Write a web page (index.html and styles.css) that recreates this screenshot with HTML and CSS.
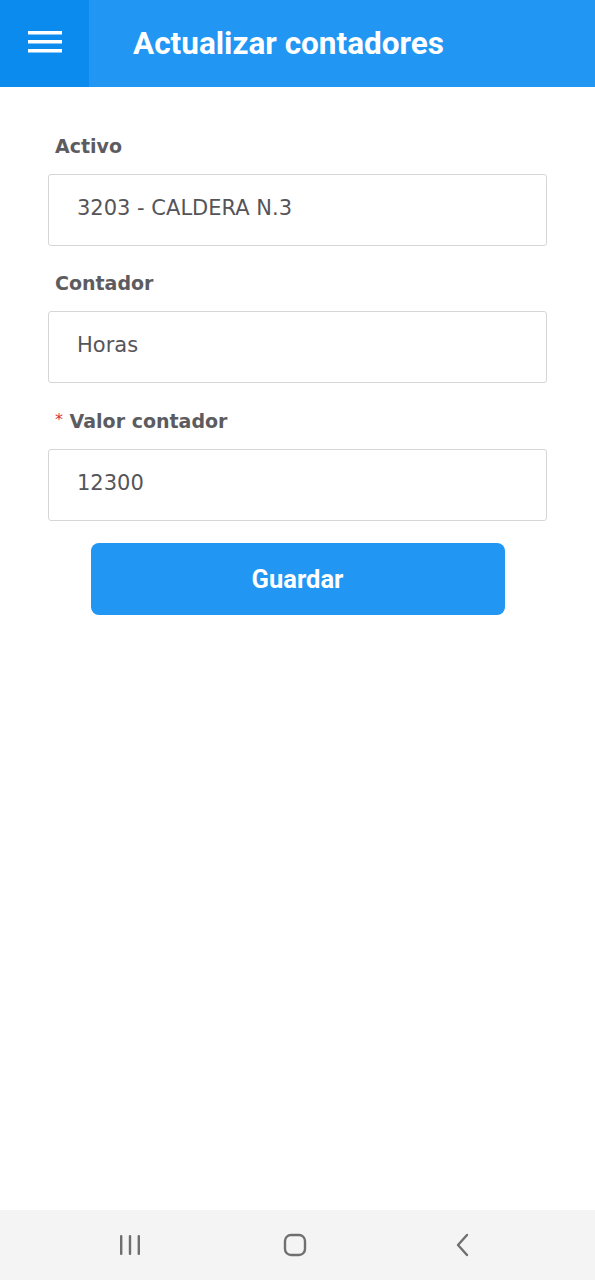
FILE: index.html
```
<!DOCTYPE html>
<html lang="es">
<head>
<meta charset="utf-8">
<link rel="stylesheet" href="styles.css">
</head>
<body>
<div class="screen">
  <header class="appbar">
    <div class="menu-btn">
      <svg width="34" height="22" viewBox="0 0 34 22"><rect x="0" y="0" width="34" height="3.5" fill="#fff"/><rect x="0" y="9" width="34" height="3.5" fill="#fff"/><rect x="0" y="18" width="34" height="3.5" fill="#fff"/></svg>
    </div>
    <h1 class="title">Actualizar contadores</h1>
  </header>
  <main class="form">
    <div class="field">
      <label class="label">Activo</label>
      <div class="input">3203 - CALDERA N.3</div>
    </div>
    <div class="field">
      <label class="label">Contador</label>
      <div class="input">Horas</div>
    </div>
    <div class="field">
      <label class="label"><span class="req">*</span> Valor contador</label>
      <div class="input">12300</div>
    </div>
    <div class="actions">
      <button class="btn">Guardar</button>
    </div>
  </main>
  <nav class="navbar">
    <svg width="24" height="22" viewBox="0 0 24 22"><rect x="2" y="1" width="2.4" height="20" rx="1" fill="#6f6f6f"/><rect x="10.8" y="1" width="2.4" height="20" rx="1" fill="#6f6f6f"/><rect x="19.6" y="1" width="2.4" height="20" rx="1" fill="#6f6f6f"/></svg>
    <svg width="24" height="24" viewBox="0 0 24 24"><rect x="2" y="2" width="20" height="20" rx="6" fill="none" stroke="#6f6f6f" stroke-width="2.4"/></svg>
    <svg width="24" height="24" viewBox="0 0 24 24"><path d="M19 2 L10 12 L19 22" fill="none" stroke="#6f6f6f" stroke-width="2.4" stroke-linecap="round" stroke-linejoin="round"/></svg>
  </nav>
</div>
</body>
</html>
```
FILE: styles.css
```
* { box-sizing: border-box; }
html, body { margin: 0; padding: 0; background: #fff; }
.screen {
  width: 595px;
  height: 1280px;
  display: flex;
  flex-direction: column;
}
.appbar {
  height: 87px;
  background: #2196f3;
  display: flex;
  align-items: stretch;
  flex: none;
}
.menu-btn {
  width: 89px;
  background: #0c8bef;
  display: flex;
  align-items: center;
  padding-left: 28px;
  padding-bottom: 4px;
}
.title {
  margin: 0;
  padding-left: 44px;
  display: flex;
  align-items: center;
  padding-bottom: 1px;
  font-family: Roboto, "Liberation Sans", sans-serif;
  font-weight: 700;
  font-size: 31.5px;
  color: #fff;
}
.form {
  flex: 1;
  padding: 44px 48px 0 48px;
  display: flex;
  flex-direction: column;
}
.field {
  display: flex;
  flex-direction: column;
  margin-bottom: 22px;
}
.label {
  font-family: "DejaVu Sans", "Open Sans", sans-serif;
  font-weight: 700;
  font-size: 19px;
  color: #5c5c60;
  padding-left: 7px;
  line-height: 30px;
  margin-bottom: 13px;
}
.req { color: #d9363e; font-size: 16px; font-weight: 400; vertical-align: 3px; }
.input {
  height: 72px;
  border: 1px solid #d6d6d6;
  border-radius: 3px;
  padding-left: 28px;
  display: flex;
  align-items: center;
  font-family: "DejaVu Sans", "Open Sans", sans-serif;
  font-size: 21px;
  color: #555559;
  padding-bottom: 4px;
}
.actions {
  display: flex;
  justify-content: center;
}
.btn {
  width: 414px;
  height: 72px;
  background: #2196f3;
  border: none;
  border-radius: 8px;
  color: #fff;
  font-family: Roboto, "Liberation Sans", sans-serif;
  font-weight: 700;
  font-size: 25.5px;
  padding-bottom: 2px;
}
.navbar {
  height: 70px;
  flex: none;
  background: #f4f4f4;
  display: flex;
  justify-content: space-around;
  align-items: center;
  padding: 0 52px 0 47px;
  gap: 0;
}
```
